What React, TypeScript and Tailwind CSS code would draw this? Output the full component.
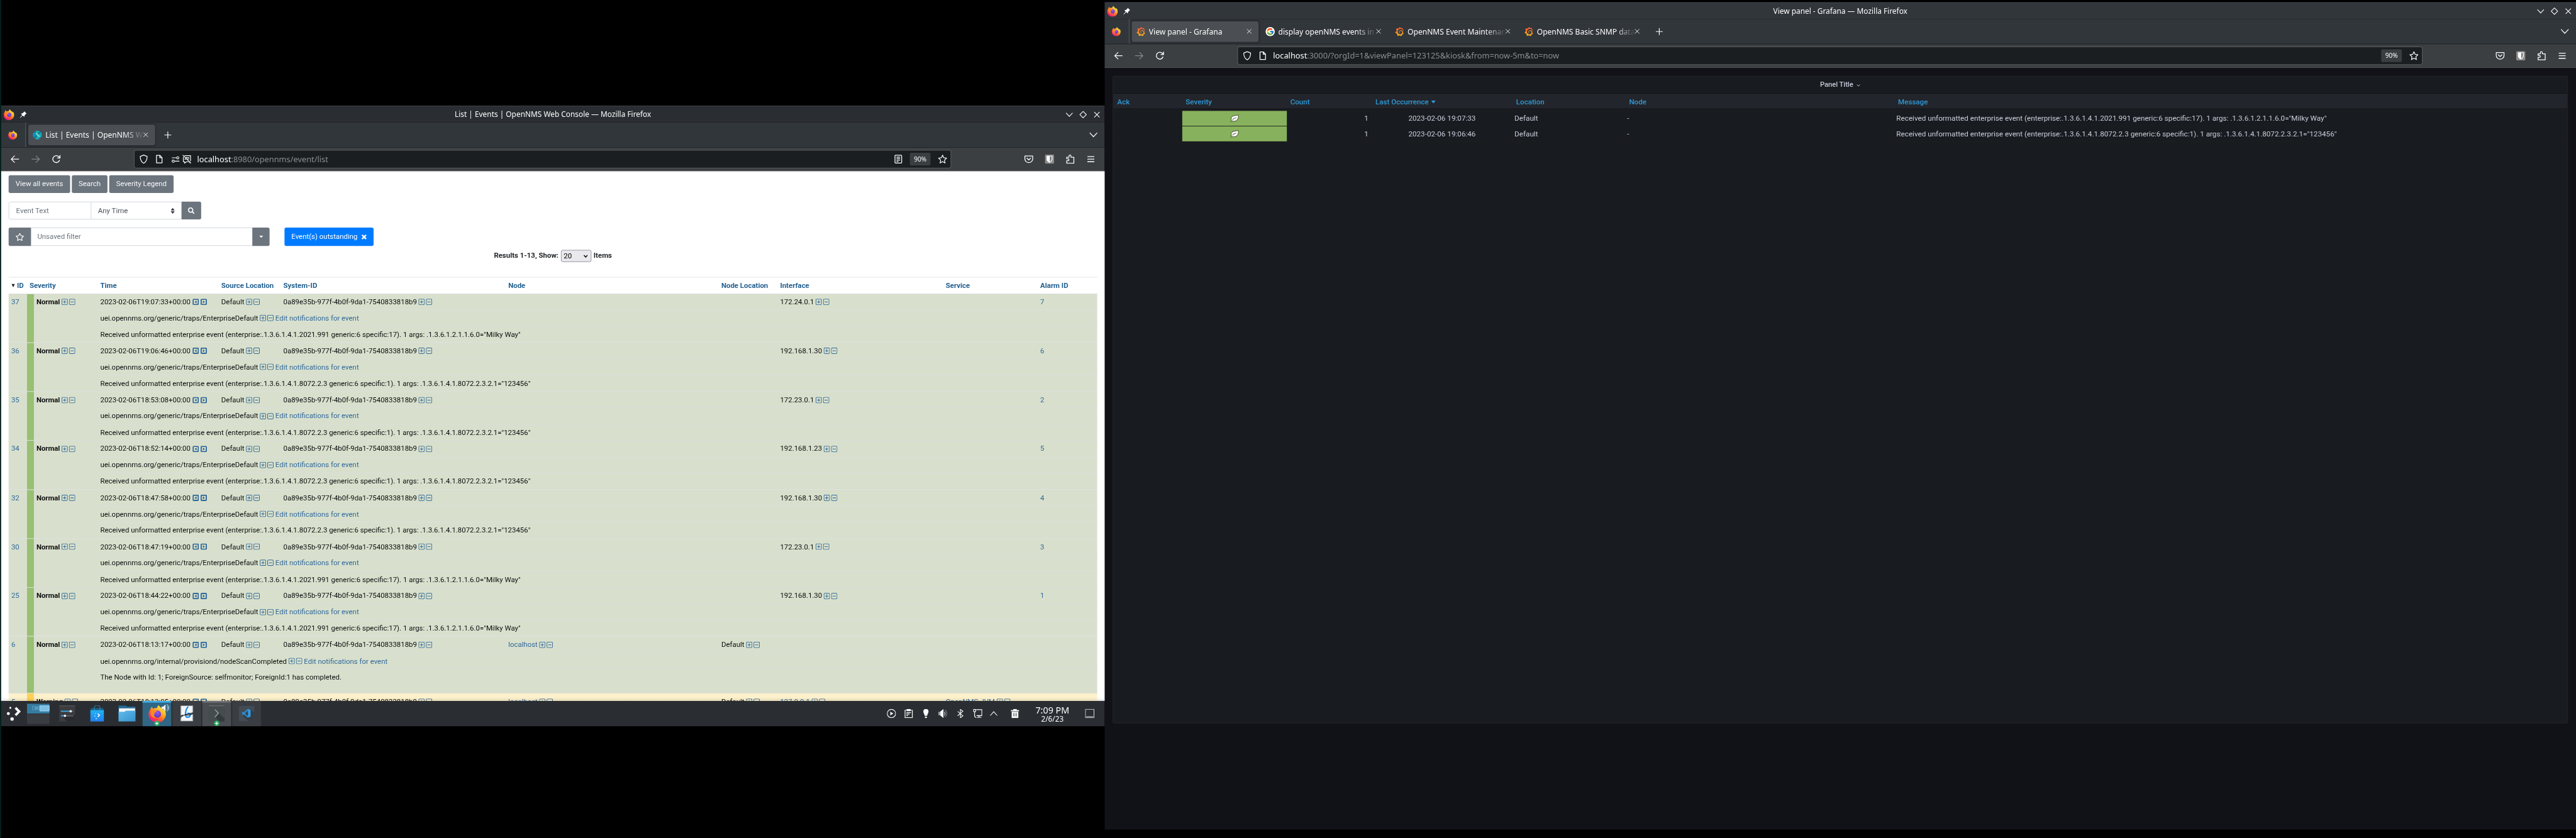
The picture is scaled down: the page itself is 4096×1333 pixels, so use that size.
import type { ReactNode } from "react";
import { FaRegStar, FaSearch } from "react-icons/fa";
import { SiGrafana } from "react-icons/si";
import { FcGoogle } from "react-icons/fc";

/* ---------- small drawings ---------- */

function Stroke({ size = 16, box = 16, w = 1.2, className = "", children }: { size?: number; box?: number; w?: number; className?: string; children: ReactNode }) {
  return (
    <svg width={size} height={size} viewBox={`0 0 ${box} ${box}`} fill="none" stroke="currentColor" strokeWidth={w} className={`shrink-0 ${className}`}>
      {children}
    </svg>
  );
}

function Firefox({ size }: { size: number }) {
  return (
    <svg width={size} height={size} viewBox="0 0 32 32" className="shrink-0">
      <defs>
        <linearGradient id="ffBody" x1="0.85" y1="0.05" x2="0.2" y2="0.95">
          <stop offset="0" stopColor="#fff044" />
          <stop offset="0.3" stopColor="#ffbd2f" />
          <stop offset="0.55" stopColor="#ff7a25" />
          <stop offset="0.8" stopColor="#ff3750" />
          <stop offset="1" stopColor="#e3189b" />
        </linearGradient>
        <radialGradient id="ffGlobe" cx="0.5" cy="0.3" r="0.8">
          <stop offset="0" stopColor="#9059ff" />
          <stop offset="1" stopColor="#5b2fa8" />
        </radialGradient>
      </defs>
      <path d="M18.500 0c-1 2-2.600 3.400-3.200 6-2-.6-4.600-.3-6.300.8C7.700 6 7 4.600 6.700 3.200 4.800 4.700 4 6.600 3.800 8 1.600 10.400.6 13.500.6 16.600.6 25.200 7.600 32 16 32s15.500-6.700 15.500-15.300c0-4.200-1.600-7.700-4.500-10.200.4 1.400.4 2.500.2 3.500C25.700 5.500 20 4.600 18.500 0z" fill="url(#ffBody)" />
      <circle cx="16.300" cy="16.500" r="6.600" fill="url(#ffGlobe)" />
      <path d="M5 9.500c2.600-1.500 5.200-.8 7 .5 1.500 0 3.200.4 3.600 1.300.2 1-1.800 1.600-3.400 2.300-.8.5-.6 1.800-1.300 2.700-1.600 3 .7 6.500 4.700 6.800-5.600 1.800-10-1.400-11-5.600C4.200 14.500 4.200 11.800 5 9.500z" fill="#ff8a1f" />
    </svg>
  );
}

function OpenNmsLogo() {
  return (
    <svg width="16" height="16" viewBox="0 0 16 16" className="shrink-0">
      <circle cx="8" cy="8" r="7.800" fill="#16a9b9" />
      <path d="M0 8a8 8 0 0 1 3-6l4 5-4 6.500A8 8 0 0 1 0 8z" fill="#0f8fbf" />
      <path d="M3 1.500 13.200 14.200M13.300 2 9.500 6.500M6.500 9.500 2.800 14" stroke="#3a474d" strokeWidth="1.300" />
      <path d="m4.400 4.600 7.300 8.400V9.700L6.300 3.800z" fill="#6fe8d6" />
    </svg>
  );
}

function GrafanaLogo() {
  return (
    <>
      <svg width="0" height="0" className="absolute">
        <defs>
          <linearGradient id="grafanaFill" x1="0" y1="1" x2="0" y2="0">
            <stop offset="0" stopColor="#fcc21b" />
            <stop offset="0.45" stopColor="#f58a2c" />
            <stop offset="1" stopColor="#ef5a28" />
          </linearGradient>
        </defs>
      </svg>
      <SiGrafana size={16} fill="url(#grafanaFill)" className="shrink-0" />
    </>
  );
}

function GoogleLogo() {
  return (
    <span className="flex size-[16px] shrink-0 items-center justify-center rounded-full bg-white">
      <FcGoogle size={14} />
    </span>
  );
}

const Leaf = () => (
  <svg width="16" height="14" viewBox="0 0 16 14" className="shrink-0">
    <path d="M14.300 1C10.500 2.600 4.500 1.600 2.600 5.500c-.9 2-.5 3.700.3 4.800L1.500 12.300l1 .8 1.600-1.700c4 1.800 8.300-.2 9.800-4C14.700 5.300 15.100 3 14.300 1z" fill="#fff" stroke="#26301c" strokeWidth=".9" strokeLinejoin="round" />
    <path d="M4.300 9.300C6 7.200 8.300 6.300 11 5.800" fill="none" stroke="#4a5c3a" strokeWidth="1.100" />
  </svg>
);

const Chevron = ({ size = 13 }: { size?: number }) => (
  <Stroke size={size} box={12} w={1.1}><path d="M.8 3.200 6 8.800l5.200-5.600" /></Stroke>
);
const Cross = ({ size = 10 }: { size?: number }) => (
  <Stroke size={size} box={10} w={1.1}><path d="m.8.8 8.400 8.400M9.200.8.8 9.200" /></Stroke>
);
const Star = () => (
  <Stroke w={1.3}><path d="m8 1 2.100 4.600 4.900.6-3.600 3.400.9 5.200L8 12.300l-4.300 2.500.9-5.200L1 6.200l4.900-.6z" strokeLinejoin="round" /></Stroke>
);
const Shield = () => (
  <Stroke w={1.3}><path d="M8 .9 2 3.300c0 5.500 1.600 9.600 6 11.900 4.400-2.300 6-6.400 6-11.900z" strokeLinejoin="round" /></Stroke>
);
const Page = () => (
  <Stroke w={1.4}><path d="M3.300 1.500h6l3.600 3.700v9.300H3.300zM9 1.500v4h3.900" strokeLinejoin="round" /></Stroke>
);

/* ---------- browser frame shared by both windows ---------- */

type Tab = { label: string; icon: ReactNode };

function BrowserFrame({ title, tabs, active, host, path, reader }: { title: string; tabs: Tab[]; active: boolean; host: string; path: string; reader: boolean }) {
  return (
    <div className="h-[114px] w-full shrink-0 font-['Noto_Sans',sans-serif] text-[#fcfcfc]">
      <div className={`grid h-[29px] grid-cols-[1fr_auto_1fr] items-center border-t border-[#40464b] ${active ? "bg-[#31363b]" : "bg-[#2a2e32]"}`}>
        <div className="flex items-center gap-[9px] pl-[4px]">
          <Firefox size={19} />
          <svg width="13" height="13" viewBox="0 0 13 13" fill="currentColor">
            <path d="M8.200.6 12.400 4.800 11 5.400 8.700 8l-.5 2.600L5.600 8.200 1 12.400.7 12l3.900-4.800L2.300 4.700l2.700-.4L7.600 2z" />
          </svg>
        </div>
        <div className="text-[13px] leading-[28px] whitespace-nowrap">{title}</div>
        <div className="flex items-center justify-end pr-[2px]">
          <span className="flex w-[24px] justify-center"><Chevron size={13} /></span>
          <span className="flex w-[24px] justify-center">
            <Stroke size={13} box={12} w={1.1}><path d="M6 .8 11.200 6 6 11.200.8 6z" /></Stroke>
          </span>
          <span className="flex w-[24px] justify-center"><Cross size={11} /></span>
        </div>
      </div>

      <div className="flex h-[44px] items-center border-b border-[#202326] bg-[#31363b]">
        <div className="flex w-[42px] justify-center pr-[2px]"><Firefox size={16} /></div>
        <div className="h-full w-px bg-[#575b5f]" />
        <div className="ml-[4px] flex gap-[4px]">
          {tabs.map((t, i) => (
            <div key={t.label} className={`flex h-[36px] w-[221px] items-center rounded-[4px] pr-[12px] pl-[8px] ${i === 0 ? "bg-[#4b4e53] shadow-[0_0_3px_rgba(0,0,0,0.5)]" : ""}`}>
              {t.icon}
              <span className="ml-[6px] w-[170px] overflow-hidden text-[13.200px] leading-[36px] whitespace-nowrap [mask-image:linear-gradient(to_right,black_136px,transparent_172px)]">
                {t.label}
              </span>
              <span className="ml-auto"><Cross size={9} /></span>
            </div>
          ))}
        </div>
        <div className="ml-[15px]">
          <Stroke size={14} box={14} w={1.3}><path d="M7 1v12M1 7h12" /></Stroke>
        </div>
        <div className="mr-[8px] ml-auto flex w-[24px] justify-center"><Chevron size={15} /></div>
      </div>

      <div className={`flex h-[41px] items-center border-b bg-[#3b3f42] ${active ? "border-[#5e6265]" : "border-[#5d5659]"}`}>
        <div className="flex pl-[6px]">
          <span className="flex w-[36px] justify-center"><Stroke w={1.4}><path d="M15 8H1.600M7.600 2 1.600 8l6 6" /></Stroke></span>
          <span className="flex w-[36px] justify-center text-[#85888a]"><Stroke w={1.4}><path d="M1 8h13.400M8.400 2l6 6-6 6" /></Stroke></span>
          <span className="flex w-[36px] justify-center"><Stroke w={1.5}><path d="M13.700 9.500A6 6 0 1 1 12.300 3.800L14 5.600M14.400 1v5h-5" /></Stroke></span>
        </div>
        <div className="mr-[117px] ml-[117px] flex h-[32px] flex-1 items-center rounded-[4px] border border-[#5f6265] bg-[#1b1e20]">
          <span className="flex w-[31px] justify-center"><Shield /></span>
          <span className="flex w-[24px] justify-center"><Page /></span>
          {reader && (
            <span className="mr-[4px] ml-[4px] flex items-center">
              <span className="flex w-[24px] justify-center">
                <Stroke size={15} w={1.300}>
                  <path d="M1 5h8.500M15 11.300H6.500" />
                  <circle cx="12" cy="5" r="2.100" />
                  <circle cx="3.600" cy="11.300" r="2.100" />
                </Stroke>
              </span>
              <Stroke w={1.300}>
                <path d="M4 2h10.500v9.500M12 12.500 14.500 15M2 4v8.500h2.200V15l3-2.500H11M6.500 5.200H12M9 7.800h3M4 8h3M1 .8 15 15" />
              </Stroke>
            </span>
          )}
          <span className="ml-[6px] text-[14px] leading-[30px] whitespace-nowrap text-[#8b8e90]">
            <span className="text-[#fcfcfc]">{host}</span>{path}
          </span>
          <span className="ml-auto flex items-center">
            {reader && (
              <span className="mr-[12px]">
                <Stroke w={1.400}>
                  <rect x="2.200" y="1.200" width="11.600" height="13.600" rx="1.200" />
                  <path d="M4.800 4.500h6.400M4.800 7h6.400M4.800 9.500h6.400M4.800 12h3.400" />
                </Stroke>
              </span>
            )}
            <span className="mr-[6px] h-[22px] w-[36px] rounded-[3px] bg-[#3b3e40] text-center text-[11px] leading-[22px]">90%</span>
            <span className="flex w-[29px] justify-center"><Star /></span>
          </span>
        </div>
        <div className="flex pr-[6px]">
          <span className="flex w-[36px] justify-center">
            <Stroke w={1.400}><path d="M1.200 2.500h13.600v5A6.800 6.500 0 0 1 1.200 7.500zM4.500 6 8 9.400 11.500 6" strokeLinejoin="round" /></Stroke>
          </span>
          <span className="flex w-[36px] justify-center">
            <svg width="16" height="16" viewBox="0 0 16 16">
              <rect width="16" height="16" rx="2" fill="#8c8c8c" />
              <path d="M3 2h10v6c0 3-2.200 5-5 6.500C5.200 13 3 11 3 8z" fill="#fff" />
              <path d="M8.600 3.300h3V8c0 2-1.200 3.500-3 4.700z" fill="#77797b" />
            </svg>
          </span>
          <span className="flex w-[36px] justify-center">
            <Stroke w={1.400}><path d="M2 15.200v-4.400h2.200a1.600 1.600 0 0 0 0-3.400H2V4.600h4V2.600a1.700 1.700 0 0 1 3.400 0v2h5v10.600z" strokeLinejoin="round" /></Stroke>
          </span>
          <span className="flex w-[36px] justify-center"><Stroke w={1.400}><path d="M2 3.500h12M2 8h12M2 12.500h12" /></Stroke></span>
        </div>
      </div>
    </div>
  );
}

/* ---------- OpenNMS event list ---------- */

type Event = { id: string; severity: "Normal" | "Warning"; time: string; uei: string; message: string; node?: string; nodeLocation?: string; iface?: string; ifaceLink?: boolean; service?: string; alarm?: string };

const TRAP = "uei.opennms.org/generic/traps/EnterpriseDefault";
const MILKY = 'Received unformatted enterprise event (enterprise:.1.3.6.1.4.1.2021.991 generic:6 specific:17). 1 args: .1.3.6.1.2.1.1.6.0="Milky Way"';
const DIGITS = 'Received unformatted enterprise event (enterprise:.1.3.6.1.4.1.8072.2.3 generic:6 specific:1). 1 args: .1.3.6.1.4.1.8072.2.3.2.1="123456"';

const EVENTS: Event[] = [
  { id: "37", severity: "Normal", time: "2023-02-06T19:07:33+00:00", uei: TRAP, message: MILKY, iface: "172.24.0.1", alarm: "7" },
  { id: "36", severity: "Normal", time: "2023-02-06T19:06:46+00:00", uei: TRAP, message: DIGITS, iface: "192.168.1.30", alarm: "6" },
  { id: "35", severity: "Normal", time: "2023-02-06T18:53:08+00:00", uei: TRAP, message: DIGITS, iface: "172.23.0.1", alarm: "2" },
  { id: "34", severity: "Normal", time: "2023-02-06T18:52:14+00:00", uei: TRAP, message: DIGITS, iface: "192.168.1.23", alarm: "5" },
  { id: "32", severity: "Normal", time: "2023-02-06T18:47:58+00:00", uei: TRAP, message: DIGITS, iface: "192.168.1.30", alarm: "4" },
  { id: "30", severity: "Normal", time: "2023-02-06T18:47:19+00:00", uei: TRAP, message: MILKY, iface: "172.23.0.1", alarm: "3" },
  { id: "25", severity: "Normal", time: "2023-02-06T18:44:22+00:00", uei: TRAP, message: MILKY, iface: "192.168.1.30", alarm: "1" },
  { id: "6", severity: "Normal", time: "2023-02-06T18:13:17+00:00", uei: "uei.opennms.org/internal/provisiond/nodeScanCompleted", message: "The Node with Id: 1; ForeignSource: selfmonitor; ForeignId:1 has completed.", node: "localhost", nodeLocation: "Default" },
  { id: "5", severity: "Warning", time: "2023-02-06T18:13:05+00:00", uei: "", message: "", node: "localhost", nodeLocation: "Default", iface: "127.0.0.1", ifaceLink: true, service: "OpenNMS-JVM" },
];

function PlusMinus() {
  return (
    <span className="ml-[3px] inline-flex gap-[2px] text-[#356a98]">
      <Stroke size={11} box={11} w={1.1}><rect x=".6" y=".6" width="9.800" height="9.800" rx="1.800" /><path d="M5.500 2.700v5.600M2.700 5.500h5.600" /></Stroke>
      <Stroke size={11} box={11} w={1.1}><rect x=".6" y=".6" width="9.800" height="9.800" rx="1.800" /><path d="M2.700 5.500h5.600" /></Stroke>
    </span>
  );
}

function BeforeAfter() {
  return (
    <span className="ml-[3px] inline-flex gap-[3px] text-[#2f6797]">
      <Stroke size={11} box={11} w={2}><rect x="1" y="1" width="9" height="9" rx="1.200" /><path d="M7 3v5L3.400 5.500z" fill="currentColor" stroke="none" /></Stroke>
      <Stroke size={11} box={11} w={2}><rect x="1" y="1" width="9" height="9" rx="1.200" /><path d="M4 3v5l3.600-2.500z" fill="currentColor" stroke="none" /></Stroke>
    </span>
  );
}

function EventRow({ e }: { e: Event }) {
  const warn = e.severity === "Warning";
  return (
    <div className={`flex leading-[28px] ${warn ? "bg-[#fdf1cc]" : "bg-[#d8e0cd]"} ${e.id === "6" ? "h-[99px]" : "h-[85.280px]"}`}>
      <div className="w-[32px] border-t border-[#dbdddb] pl-[4.600px] text-[#33689a]">{e.id}</div>
      <div className={`w-[12px] border-t border-[#dfe3de] ${warn ? "bg-[#ffd055]" : "bg-[#99bf73]"}`} />
      <div className="flex w-[110px] border-t border-[#dbdddb] pl-[4.400px]">
        <span className="flex h-[28px] items-center"><b className="text-[12.400px]">{e.severity}</b><PlusMinus /></span>
      </div>
      <div className="flex-1">
        <div className="grid h-[28.430px] grid-cols-[210.500px_108px_391.300px_370.700px_102.300px_288.200px_164.500px_1fr] border-t border-[#dbdddb] pl-[5.500px]">
          <span className="flex h-[28px] items-center">{e.time}<BeforeAfter /></span>
          <span className="flex h-[28px] items-center">Default<PlusMinus /></span>
          <span className="flex h-[28px] items-center">0a89e35b-977f-4b0f-9da1-7540833818b9<PlusMinus /></span>
          <span className="flex h-[28px] items-center text-[#33689a]">{e.node}{e.node && <PlusMinus />}</span>
          <span className="flex h-[28px] items-center">{e.nodeLocation}{e.nodeLocation && <PlusMinus />}</span>
          <span className={`flex h-[28px] items-center ${e.ifaceLink ? "text-[#33689a]" : ""}`}>{e.iface}{e.iface && <PlusMinus />}</span>
          <span className="flex h-[28px] items-center text-[#33689a]">{e.service}{e.service && <PlusMinus />}</span>
          <span className="text-[#33689a]">{e.alarm}</span>
        </div>
        <div className="flex h-[28.430px] items-center border-t border-[#dbdddb] pl-[5.500px]">
          {e.uei}
          {e.uei && <PlusMinus />}
          {e.uei && <span className="ml-[3px] text-[#33689a]">Edit notifications for event</span>}
        </div>
        <div className="h-[28px] border-t border-[#dbdddb] pl-[5.500px]">{e.message}</div>
      </div>
    </div>
  );
}

function EventPage() {
  return (
    <div className="relative h-[922px] w-full shrink-0 overflow-hidden bg-white px-[13px] pt-[7px] font-['Roboto',sans-serif] text-[12.500px] text-[#0c0d0e]">
      <div className="flex gap-[3px] text-center leading-[30px] text-[#f5f6f7]">
        <div className="h-[31px] w-[107px] rounded-[3px] bg-[#6c757d]">View all events</div>
        <div className="h-[31px] w-[62px] rounded-[3px] bg-[#6c757d]">Search</div>
        <div className="h-[31px] w-[112px] rounded-[3px] bg-[#6c757d]">Severity Legend</div>
      </div>

      <div className="mt-[15px] flex h-[31px] leading-[29px]">
        <div className="w-[144px] rounded-l-[3px] border border-[#ced4da] pl-[12px] text-[#6c757d]">Event Text</div>
        <div className="flex w-[157px] items-center justify-between border border-l-0 border-[#ced4da] pr-[11px] pl-[11.500px] text-[#495057]">
          Any Time
          <svg width="7" height="10" viewBox="0 0 7 10" fill="#343a40"><path d="M0 4.300 3.500 0 7 4.300zM0 5.700 3.500 10 7 5.700z" /></svg>
        </div>
        <div className="flex w-[34px] items-center justify-center rounded-r-[3px] bg-[#6c757d] text-white"><FaSearch size={11.5} /></div>
      </div>

      <div className="mt-[14px] flex h-[32px] leading-[30px]">
        <div className="flex w-[39px] items-center justify-center rounded-l-[3px] bg-[#6c757d] text-white"><FaRegStar size={15} /></div>
        <div className="w-[385px] border-y border-[#ced4da] pl-[11px] text-[#6c757d]">Unsaved filter</div>
        <div className="flex w-[30px] items-center justify-center rounded-r-[3px] bg-[#6c757d]">
          <svg width="7" height="4" viewBox="0 0 7 4" fill="#fff"><path d="M0 0h7L3.500 4z" /></svg>
        </div>
        <div className="ml-[26px] flex w-[155px] items-center justify-center gap-[7px] rounded-[3px] bg-[#007bff] text-white">
          Event(s) outstanding
          <svg width="9" height="9" viewBox="0 0 9 9" stroke="#fff" strokeWidth="2.600"><path d="m1 1 7 7M8 1 1 8" /></svg>
        </div>
      </div>

      <div className="mt-[7px] flex h-[21px] items-center justify-center gap-[4px] font-bold text-[#212529]">
        Results 1-13, Show:
        <div className="flex h-[21px] w-[53px] items-center justify-between rounded-[3px] border border-[#8f8f9d] bg-[#e9e9ed] pr-[5px] pl-[4px] text-[12.800px] font-normal text-black">
          20
          <Stroke size={8} box={8} w={1.5}><path d="M1 2.300 4 5.600l3-3.300" /></Stroke>
        </div>
        Items
      </div>

      <div className="mt-[26px] border-t border-[#dee2e6]">
        <div className="grid h-[27.500px] grid-cols-[36.300px_123.200px_210.500px_108px_391.300px_370.700px_102.300px_288.200px_164.500px_1fr] leading-[28px] font-bold text-[#24608f]">
          <span className="flex items-center gap-[3.500px] pl-[5px]">
            <svg width="6" height="6" viewBox="0 0 6 6" fill="#212529"><path d="M0 0h6L3 6z" /></svg>ID
          </span>
          <span>Severity</span>
          <span>Time</span>
          <span>Source Location</span>
          <span>System-ID</span>
          <span>Node</span>
          <span>Node Location</span>
          <span>Interface</span>
          <span>Service</span>
          <span>Alarm ID</span>
        </div>
        {EVENTS.map((e) => <EventRow key={e.id} e={e} />)}
      </div>
      <div className="absolute inset-x-0 bottom-0 h-[6px] bg-gradient-to-b from-transparent to-black/10" />
    </div>
  );
}

/* ---------- desktop panel ---------- */

const Badge = () => (
  <svg width="10" height="10" viewBox="0 0 10 10" className="absolute bottom-0 left-[20px]">
    <circle cx="5" cy="5" r="4.800" fill="#27ae60" />
    <path d="M5 2.200v5.600M2.200 5h5.600" stroke="#fff" strokeWidth="1.300" />
  </svg>
);

function TaskSlot({ className = "", children }: { className?: string; children: ReactNode }) {
  return <div className={`relative flex h-full w-[50px] items-center justify-center ${className}`}>{children}</div>;
}

function Taskbar() {
  return (
    <div className="flex h-[44px] w-full shrink-0 items-center bg-[#2a2e32] font-['Noto_Sans',sans-serif] text-[#fcfcfc]">
      <div className="flex w-[43px] justify-center">
        <svg width="26" height="28" viewBox="0 0 26 28">
          <g fill="#fcfcfc"><circle cx="7" cy="4" r="1.700" /><circle cx="3.500" cy="14" r="2.600" /><circle cx="10" cy="23.500" r="3" /></g>
          <path d="m16 4 6.300 6.500L16 17" fill="none" stroke="#fcfcfc" strokeWidth="4.200" />
        </svg>
      </div>
      <div className="ml-[2px] flex w-[39px] flex-col gap-px">
        <div className="flex h-[17px] bg-[#357b9f] pt-[3px]">
          <div className="mt-px ml-[9px] h-[7px] w-[13px] border border-[#5fa3c4] p-[1px]"><div className="ml-[2px] h-[3px] w-[7px] bg-[#5fa3c4]" /></div>
          <div className="h-[10px] flex-1 border border-[#93d3f5] bg-[#7fbfe2]" />
        </div>
        <div className="h-[17px] bg-[#3a3e43]" />
      </div>
      <div className="ml-[6px] flex h-full gap-[2px]">
        <TaskSlot>
          <svg width="28" height="28" viewBox="0 0 28 28">
            <rect width="28" height="28" fill="#3b3d40" /><path d="M0 .5h28" stroke="#6d7072" /><path d="M5 19 14 28h14V16z" fill="#2a2b2e" />
            <path d="M3 10h17M3 18h7" stroke="#3daee9" strokeWidth="2" /><path d="M20 10h5M10 18h15" stroke="#66696b" strokeWidth="1.500" />
            <circle cx="20" cy="10" r="2" fill="#fff" /><circle cx="10" cy="18" r="2" fill="#fff" />
          </svg>
        </TaskSlot>
        <TaskSlot>
          <svg width="24" height="28" viewBox="0 0 24 28">
            <defs><linearGradient id="bag" x1="0" y1="0" x2="0" y2="1"><stop offset="0" stopColor="#20b2f5" /><stop offset="1" stopColor="#1f80ef" /></linearGradient></defs>
            <path d="M2 4.500h20L24 8H0z" fill="#1d5d83" /><path d="M7 9V4a5 4 0 0 1 10 0v5" fill="none" stroke="#2c88b8" strokeWidth="1.300" />
            <rect y="8" width="24" height="20" fill="url(#bag)" />
            <path d="m13 14 3 3-3 3" fill="none" stroke="#fff" strokeWidth="1.800" /><circle cx="9" cy="14" r=".9" fill="#bfe6ff" /><circle cx="8" cy="18.500" r="1" fill="#bfe6ff" /><circle cx="10.500" cy="23" r="1.200" fill="#bfe6ff" />
          </svg>
        </TaskSlot>
        <TaskSlot>
          <svg width="30" height="28" viewBox="0 0 30 28">
            <defs><linearGradient id="dir" x1="0" y1="0" x2="1" y2="1"><stop offset="0" stopColor="#62bbea" /><stop offset="1" stopColor="#3493cf" /></linearGradient></defs>
            <path d="M0 0h13l2 2h15v12H0z" fill="#236b96" /><path d="M1 5h28v8H1z" fill="#f4f6f7" />
            <path d="M0 11h11l1.500-2H30v19H0z" fill="url(#dir)" />
          </svg>
        </TaskSlot>
        <TaskSlot className="border-t-[3px] border-[#3daee9] bg-[#316684]">
          <span className="pb-[2px]"><Firefox size={31} /></span>
          <svg width="14" height="14" viewBox="0 0 14 14" className="absolute top-[2px] right-[3px]">
            <path d="M0 5h3l4-4v12L3 9H0z" fill="#f4f4f4" /><path d="M9 3.500a4 4 0 0 1 0 7M9 1a6.500 6.500 0 0 1 0 12" fill="none" stroke="#dfe8ee" />
          </svg>
          <Badge />
        </TaskSlot>
        <TaskSlot className="bg-[#3a3d42]">
          <svg width="24" height="28" viewBox="0 0 24 28">
            <rect x="1" width="22" height="27.500" fill="#a9aeb2" /><rect x="2.500" y="1" width="19" height="25.500" fill="#f3f5f6" />
            <path d="M14.500 2c-4 4-5.500 11-4.300 16 .8 3.600 6.500 3.200 7.600-.6.800-3-2.500-5-4.800-2.800" fill="none" stroke="#1d8cf0" strokeWidth="2.400" />
            <path d="M1 21c6-7 13-5.500 22-8.500M1 18c7-3 14 1 22-4" fill="none" stroke="#18242e" strokeWidth="1.200" />
          </svg>
        </TaskSlot>
        <TaskSlot className="border-t-[3px] border-[#6d7175] bg-[#4a4d51]">
          <svg width="28" height="28" viewBox="0 0 28 28" className="-mt-[3px]">
            <rect width="28" height="28" fill="#444c4d" /><path d="M0 .5h28" stroke="#808687" /><path d="m12 20 6-6.500L28 23v5H19z" fill="#343a3b" />
            <path d="m11 7 6 6.500-6 6.500" fill="none" stroke="#a9adad" strokeWidth="1.400" />
          </svg>
          <Badge />
        </TaskSlot>
        <TaskSlot className="bg-[#3a3d42]">
          <svg width="28" height="28" viewBox="0 0 28 28">
            <rect x=".5" y=".5" width="27" height="27" rx="1.500" fill="#434b54" /><path d="m8 18 14-11 5.500 6v14.500H17z" fill="#363d45" />
            <path d="M17 6.500 8.500 14l-2 1.500M6.500 11.500l2 1.600L17 20.500" fill="none" stroke="#2a8fd8" strokeWidth="2.200" /><path d="m16.500 6 4.500 1.800v11.400L16.500 21z" fill="#2f9ce8" />
          </svg>
        </TaskSlot>
      </div>

      <div className="ml-auto flex items-center">
        <span className="flex w-[30px] justify-center"><Stroke w={1.200}><circle cx="8" cy="8" r="7.300" /><path d="M6 4.700v6.600L11.300 8z" fill="currentColor" stroke="none" /></Stroke></span>
        <span className="flex w-[30px] justify-center"><Stroke w={1.300}><path d="M1.700 2.200h12.600v13H1.700z" /><path d="M4.500 0h7v3.800h-7z" fill="currentColor" stroke="none" /><path d="M4 6.500h8M4 9h5.500M4 11.700h3" /></Stroke></span>
        <span className="flex w-[30px] justify-center"><Stroke><path d="M8 0a4.500 4.500 0 0 1 4.500 4.500C12.500 7 10.600 9 10 12H6C5.400 9 3.500 7 3.500 4.500A4.500 4.500 0 0 1 8 0zM6.300 13.300h3.400V16H6.300z" fill="currentColor" stroke="none" /></Stroke></span>
        <span className="flex w-[30px] justify-center"><Stroke w={1.100}><path d="M0 5h1.600v6H0zM2.600 5 8.500 0v16l-5.900-5z" fill="currentColor" stroke="none" /><path d="M10 5a4 4 0 0 1 0 6" /><path d="M10.500 2a6.500 6.500 0 0 1 0 12" opacity=".45" /></Stroke></span>
        <span className="flex w-[30px] justify-center"><Stroke w={1.200}><path d="m3.200 4.200 9.200 7.800L8 15.200V.8L12.400 4 3.200 11.800" /></Stroke></span>
        <span className="flex w-[30px] justify-center"><Stroke w={1.300}><path d="M5.500 1.200h9.800v10.500H6M1 .7h3.500v4H1zM2.700 5v7.500l2.500 2.700M6.500 14.800h8M8.500 12.500h4" /></Stroke></span>
        <span className="flex w-[26px] justify-center"><Stroke size={14} box={12} w={1}><path d="M.8 9 6 3.200 11.200 9" /></Stroke></span>
        <span className="flex w-[48px] justify-center">
          <svg width="16" height="16" viewBox="0 0 16 16" fill="#fcfcfc"><path fillRule="evenodd" d="M1 2h4V0h6v2h4v2H1zM2.200 5h11.600v11H2.200zM5.500 7v6h1.200V7zM9.300 7v6h1.200V7z" /></svg>
        </span>
        <div className="flex w-[82px] flex-col items-center">
          <div className="text-[15.700px] leading-[17px]">7:09 PM</div>
          <div className="text-[12.900px] leading-[12px]">2/6/23</div>
        </div>
        <span className="flex w-[50px] justify-center pr-[2px]"><Stroke w={1}><path d="M.5.5h15v15H.5zM2 13.500h12" /></Stroke></span>
      </div>
    </div>
  );
}

/* ---------- Grafana panel ---------- */

const ALARMS = [
  { time: "2023-02-06 19:07:33", message: MILKY },
  { time: "2023-02-06 19:06:46", message: DIGITS },
];

function GrafanaPage() {
  return (
    <div className="w-full flex-1 bg-[#111217] pt-[14px] pl-[14px] font-['Roboto',sans-serif] text-[#ccccdc]">
      <div className="h-[1127px] w-[2532px] rounded-[2px] border border-[#25262a] bg-[#181b1f]">
        <div className="flex h-[30px] items-center justify-center gap-[6px] border-b border-[#111217] text-[12.200px] font-medium">
          Panel Title
          <Stroke size={7} box={8} w={1.200} className="mt-[2px]"><path d="M1 2.500 4 5.700l3-3.200" /></Stroke>
        </div>
        <div className="grid h-[27px] grid-cols-[120px_182px_148px_245px_196px_468px_1fr] border-b border-[#111217] bg-[#22252b] pt-px text-[12.700px] leading-[27px] font-medium text-[#2f9ad9]">
          <span className="pl-[7px]">Ack</span>
          <span className="pl-[6px]">Severity</span>
          <span className="pl-[6px]">Count</span>
          <span className="flex items-center gap-[4px] pl-[6px]">
            Last Occurrence
            <svg width="8" height="5" viewBox="0 0 8 5" fill="currentColor"><path d="M0 0h8L4 5z" /></svg>
          </span>
          <span className="pl-[6px]">Location</span>
          <span className="pl-[6.500px]">Node</span>
          <span className="pl-[6.500px]">Message</span>
        </div>
        <div className="mt-[2px] border-b border-[#211f20]">
          {ALARMS.map((a) => (
            <div key={a.time} className="grid h-[27px] grid-cols-[120px_182px_148px_245px_196px_468px_1fr] border-t border-[#211f20] text-[12.800px] leading-[25px]">
              <span />
              <span className="flex items-center justify-center bg-[#87b15c]"><Leaf /></span>
              <span className="border-r border-[#1f1e20] pr-[5px] text-right">1</span>
              <span className="border-r border-[#1f1e20] text-center">{a.time}</span>
              <span className="border-r border-[#1f1e20] pl-[3px]">Default</span>
              <span className="border-r border-[#1f1e20] pl-[3px]">-</span>
              <span className="pl-[3.500px] whitespace-nowrap">{a.message}</span>
            </div>
          ))}
        </div>
      </div>
    </div>
  );
}

/* ---------- both screens side by side ---------- */

export default function App() {
  return (
    <div className="h-[1333px] w-[4096px] overflow-hidden bg-black">
      <div className="flex h-[1459px] w-[4482px] origin-top-left scale-[0.91388] bg-black">
        <div className="w-[2px] shrink-0 bg-[#03201d]" />
        <div className="flex w-[1920px] shrink-0 flex-col pt-[184px]">
          <BrowserFrame
            title="List | Events | OpenNMS Web Console — Mozilla Firefox"
            tabs={[{ label: "List | Events | OpenNMS Web Console", icon: <OpenNmsLogo /> }]}
            active={false}
            host="localhost"
            path=":8980/opennms/event/list"
            reader
          />
          <EventPage />
          <Taskbar />
        </div>
        <div className="flex w-[2560px] shrink-0 flex-col pt-[4px] pb-[15px]">
          <BrowserFrame
            title="View panel - Grafana — Mozilla Firefox"
            tabs={[
              { label: "View panel - Grafana", icon: <GrafanaLogo /> },
              { label: "display openNMS events in grafana", icon: <GoogleLogo /> },
              { label: "OpenNMS Event Maintenance", icon: <GrafanaLogo /> },
              { label: "OpenNMS Basic SNMP datasource", icon: <GrafanaLogo /> },
            ]}
            active
            host="localhost"
            path=":3000/?orgId=1&viewPanel=123125&kiosk&from=now-5m&to=now"
            reader={false}
          />
          <GrafanaPage />
        </div>
      </div>
    </div>
  );
}
